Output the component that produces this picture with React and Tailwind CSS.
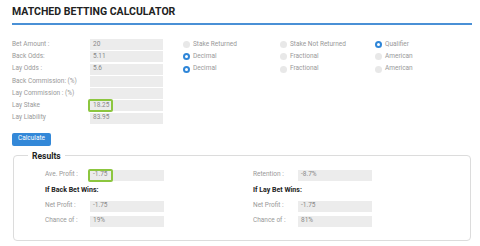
import React from "react";

const ROWS = [
  { label: "Bet Amount :", value: "20", radios: [["Stake Returned", false], ["Stake Not Returned", false], ["Qualifier", true]] },
  { label: "Back Odds:", value: "5.11", radios: [["Decimal", true], ["Fractional", false], ["American", false]] },
  { label: "Lay Odds :", value: "5.6", radios: [["Decimal", true], ["Fractional", false], ["American", false]] },
  { label: "Back Commission: (%)", value: "" },
  { label: "Lay Commission : (%)", value: "" },
  { label: "Lay Stake", value: "18.25", hl: true },
  { label: "Lay Liability", value: "83.95" },
];

const RADIO_W = ["w-[97px]", "w-[95px]", "w-[90px]"];

function Radio({ label, on, w }) {
  return (
    <div className={`flex items-center ${w}`}>
      {on ? (
        <span className="w-[7px] h-[7px] rounded-full bg-[#2f86d8] flex items-center justify-center">
          <span className="w-[3px] h-[3px] rounded-full bg-white" />
        </span>
      ) : (
        <span className="w-[7px] h-[7px] rounded-full bg-[#e8e8e8]" />
      )}
      <span className="ml-[3px] text-[6.5px] text-[#999]">{label}</span>
    </div>
  );
}

function Field({ value, hl, w = "w-[73px]" }) {
  return (
    <div className={`relative ${w} h-[11px] bg-[#ececec] flex items-center pl-[3px] text-[6.5px] text-[#888]`}>
      {hl && (
        <span className="absolute left-[-2px] top-[-1px] w-[25px] h-[13px] border-2 border-[#8cc63f] rounded-[2px]" />
      )}
      <span className="relative">{value}</span>
    </div>
  );
}

function ResultRow({ label, value, hl }) {
  return (
    <div className="flex items-center h-[11px]">
      <span className="w-[45px] text-[6.5px] text-[#999]">{label}</span>
      <Field value={value} hl={hl} w="w-[74px]" />
    </div>
  );
}

export default function App() {
  return (
    <div className="w-[480px] h-[246px] bg-white px-[12px] font-['Roboto',sans-serif] overflow-hidden">
      <h1 className="pt-[6px] text-[10.5px] leading-[12px] font-bold text-[#222]">
        MATCHED BETTING CALCULATOR
      </h1>
      <div className="mt-[5px] w-[460px] h-[2px] bg-[#4a90d6]" />

      <div className="mt-[14px] flex flex-col gap-[1.3px]">
        {ROWS.map((r) => (
          <div key={r.label} className="flex items-center h-[11px]">
            <span className="w-[78px] text-[6.5px] text-[#999]">{r.label}</span>
            <Field value={r.value} hl={r.hl} />
            {r.radios && (
              <div className="ml-[20px] flex">
                {r.radios.map(([l, on], i) => (
                  <Radio key={l + i} label={l} on={on} w={RADIO_W[i]} />
                ))}
              </div>
            )}
          </div>
        ))}
      </div>

      <button className="mt-[9px] w-[39px] h-[13px] rounded-[2px] bg-[#3388d8] text-white text-[6.5px] flex items-center justify-center">
        Calculate
      </button>

      <fieldset className="mt-[5px] ml-[1px] w-[458px] h-[90px] border border-[#dcdcdc] rounded-[4px]">
        <legend className="ml-[14px] px-[4px] text-[8.5px] font-bold text-[#222] leading-[10px]">
          Results
        </legend>
        <div className="mt-[9px] pl-[31px] flex">
          <div className="w-[208px] flex flex-col">
            <ResultRow label="Ave. Profit :" value="-1.75" hl />
            <div className="mt-[3px] h-[12px] flex items-center text-[7px] font-bold text-[#222]">If Back Bet Wins:</div>
            <div className="mt-[5px] flex flex-col gap-[4px]">
              <ResultRow label="Net Profit :" value="-1.75" />
              <ResultRow label="Chance of :" value="19%" />
            </div>
          </div>
          <div className="flex flex-col">
            <ResultRow label="Retention :" value="-8.7%" />
            <div className="mt-[3px] h-[12px] flex items-center text-[7px] font-bold text-[#222]">If Lay Bet Wins:</div>
            <div className="mt-[5px] flex flex-col gap-[4px]">
              <ResultRow label="Net Profit :" value="-1.75" />
              <ResultRow label="Chance of :" value="81%" />
            </div>
          </div>
        </div>
      </fieldset>
    </div>
  );
}
